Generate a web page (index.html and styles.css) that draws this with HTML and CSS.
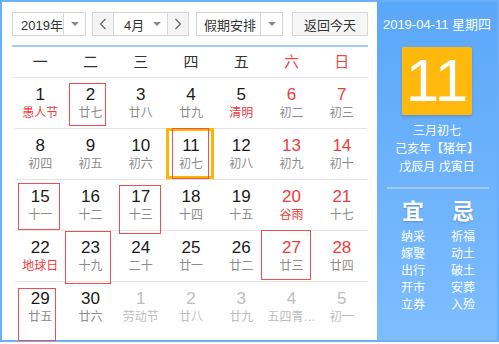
FILE: index.html
```html
<!DOCTYPE html>
<html lang="zh-CN">
<head>
  <meta charset="UTF-8" />
  <title>万年历</title>
  <link rel="stylesheet" href="styles.css">
</head>
<body>
  <div class="cal">
    <div class="main">
      <div class="toolbar">
        <div class="select year"><span class="select-text">2019年</span><span class="select-arrow"></span></div>
        <div class="month-group">
          <button class="nav-btn prev"><svg width="8" height="12" viewBox="0 0 8 12"><polyline points="6.5,1 1.5,6 6.5,11" fill="none" stroke="#666" stroke-width="1.2"/></svg></button>
          <div class="month"><span class="select-text">4月</span><span class="month-arrow"></span></div>
          <button class="nav-btn next"><svg width="8" height="12" viewBox="0 0 8 12"><polyline points="1.5,1 6.5,6 1.5,11" fill="none" stroke="#666" stroke-width="1.2"/></svg></button>
        </div>
        <div class="select holiday"><span class="select-text">假期安排</span><span class="select-arrow"></span></div>
        <button class="today-btn">返回今天</button>
      </div>

      <div class="weekdays">
        <span>一</span><span>二</span><span>三</span><span>四</span><span>五</span>
        <span class="red">六</span><span class="red">日</span>
      </div>

      <div class="days">
        <div class="day"><b>1</b><i class="fest">愚人节</i></div>
        <div class="day"><b>2</b><i>廿七</i><span class="mark m2"></span></div>
        <div class="day"><b>3</b><i>廿八</i></div>
        <div class="day"><b>4</b><i>廿九</i></div>
        <div class="day"><b>5</b><i class="fest">清明</i></div>
        <div class="day weekend"><b>6</b><i>初二</i></div>
        <div class="day weekend"><b>7</b><i>初三</i></div>

        <div class="day"><b>8</b><i>初四</i></div>
        <div class="day"><b>9</b><i>初五</i></div>
        <div class="day"><b>10</b><i>初六</i></div>
        <div class="day today"><b>11</b><i>初七</i><span class="mark m11"></span></div>
        <div class="day"><b>12</b><i>初八</i></div>
        <div class="day weekend"><b>13</b><i>初九</i></div>
        <div class="day weekend"><b>14</b><i>初十</i></div>

        <div class="day"><b>15</b><i>十一</i><span class="mark m15"></span></div>
        <div class="day"><b>16</b><i>十二</i></div>
        <div class="day"><b>17</b><i>十三</i><span class="mark m17"></span></div>
        <div class="day"><b>18</b><i>十四</i></div>
        <div class="day"><b>19</b><i>十五</i></div>
        <div class="day weekend"><b>20</b><i class="fest">谷雨</i></div>
        <div class="day weekend"><b>21</b><i>十七</i></div>

        <div class="day"><b>22</b><i class="fest">地球日</i></div>
        <div class="day"><b>23</b><i>十九</i><span class="mark m23"></span></div>
        <div class="day"><b>24</b><i>二十</i></div>
        <div class="day"><b>25</b><i>廿一</i></div>
        <div class="day"><b>26</b><i>廿二</i></div>
        <div class="day weekend"><b>27</b><i>廿三</i><span class="mark m27"></span></div>
        <div class="day weekend"><b>28</b><i>廿四</i></div>

        <div class="day last"><b>29</b><i>廿五</i><span class="mark m29"></span></div>
        <div class="day last"><b>30</b><i>廿六</i></div>
        <div class="day last other"><b>1</b><i>劳动节</i></div>
        <div class="day last other"><b>2</b><i>廿八</i></div>
        <div class="day last other"><b>3</b><i>廿九</i></div>
        <div class="day last other"><b>4</b><i>五四青…</i></div>
        <div class="day last other"><b>5</b><i>初一</i></div>
      </div>
    </div>

    <aside class="panel">
      <div class="panel-date">2019-04-11 星期四</div>
      <div class="big-day">11</div>
      <div class="lunar">
        <p>三月初七</p>
        <p>己亥年【猪年】</p>
        <p>戊辰月 戊寅日</p>
      </div>
      <div class="divider"></div>
      <div class="yiji">
        <div class="yiji-col">
          <h3>宜</h3>
          <p>纳采</p><p>嫁娶</p><p>出行</p><p>开市</p><p>立券</p>
        </div>
        <div class="yiji-col">
          <h3>忌</h3>
          <p>祈福</p><p>动土</p><p>破土</p><p>安葬</p><p>入殓</p>
        </div>
      </div>
    </aside>
  </div>
</body>
</html>
```

FILE: styles.css
```css
body {
  margin: 0;
  font-family: "Liberation Sans", "Noto Sans CJK SC", sans-serif;
  background: #fff;
}
.cal {
  display: flex;
  width: 499px;
  height: 342px;
  border: 2px solid #6ab0f8;
  box-sizing: border-box;
}
.main {
  flex: 1;
  background: #fff;
  padding: 10px 9px 0 10px;
}

/* toolbar */
.toolbar {
  display: flex;
  height: 24px;
  margin-bottom: 9px;
}
.select,
.month-group {
  display: flex;
  height: 24px;
  border: 1px solid #d6d6d6;
  box-sizing: border-box;
  font-size: 13px;
  color: #333;
}
.select-text {
  flex: 1;
  display: flex;
  align-items: center;
  padding-left: 8px;
  white-space: nowrap;
  overflow: hidden;
}
.select-arrow,
.month-arrow {
  flex: none;
  width: 21px;
  display: flex;
  align-items: center;
  justify-content: center;
}
.select-arrow {
  border-left: 1px solid #d6d6d6;
}
.select-arrow::after,
.month-arrow::after {
  content: "";
  border-left: 4px solid transparent;
  border-right: 4px solid transparent;
  border-top: 4px solid #8a8a8a;
}
.year {
  width: 74px;
}
.month-group {
  width: 97px;
  margin-left: 6px;
}
.nav-btn {
  flex: none;
  width: 21px;
  padding: 0;
  border: none;
  background: #f4f4f4;
  display: flex;
  align-items: center;
  justify-content: center;
}
.nav-btn.prev {
  border-right: 1px solid #d6d6d6;
}
.nav-btn.next {
  border-left: 1px solid #d6d6d6;
}
.month {
  flex: 1;
  display: flex;
}
.month .select-text {
  padding-left: 10px;
}
.holiday {
  width: 87px;
  margin-left: 7px;
}
.holiday .select-text {
  padding-left: 7px;
}
.today-btn {
  width: 76px;
  height: 24px;
  margin-left: 9px;
  border: 1px solid #d9d9d9;
  background: #f6f6f6;
  font-family: inherit;
  font-size: 13px;
  color: #333;
  padding: 0;
}

/* grid */
.weekdays,
.days {
  display: grid;
  grid-template-columns: repeat(7, 1fr);
  padding: 0 1px 0 3px;
}
.weekdays {
  height: 30px;
  line-height: 30px;
  border-top: 2px solid #a3cdf4;
  border-bottom: 1px solid #e4e4e4;
  text-align: center;
  font-size: 15px;
  color: #333;
}
.weekdays .red {
  color: #f04848;
}
.day {
  position: relative;
  height: 51px;
  border-bottom: 1px solid #e4e4e4;
  text-align: center;
  padding-top: 7px;
  box-sizing: border-box;
}
.day.last {
  border-bottom: none;
}
.day b {
  display: block;
  font-weight: normal;
  font-size: 17px;
  line-height: 20px;
  color: #1a1a1a;
}
.day i {
  display: block;
  font-style: normal;
  font-size: 12px;
  line-height: 16px;
  color: #8c8c8c;
  white-space: nowrap;
}
.day.weekend b {
  color: #ee3b3b;
}
.day i.fest {
  color: #ee3b3b;
}
.day.other b,
.day.other i {
  color: #bdbdbd;
}
.day.today::after {
  content: "";
  position: absolute;
  left: 0;
  top: -1px;
  width: 48px;
  height: 51px;
  border: 3px solid #ffb400;
  box-sizing: border-box;
}

/* red annotation boxes */
.mark {
  position: absolute;
  border: 1px solid #ef4f4f;
  box-sizing: border-box;
  z-index: 1;
}
.m2  { left: 4px;  top: 5px;  width: 37px; height: 43px; }
.m11 { left: 6px;  top: -1px; width: 37px; height: 51px; }
.m15 { left: 3px;  top: 3px;  width: 42px; height: 47px; }
.m17 { left: 3px;  top: 5px;  width: 42px; height: 49px; }
.m23 { left: 0;    top: 0;    width: 46px; height: 53px; }
.m27 { left: -5px; top: -1px; width: 50px; height: 50px; }
.m29 { left: 3px;  top: 6px;  width: 38px; height: 53px; }

/* side panel */
.panel {
  width: 120px;
  background: linear-gradient(#5ba7f9, #7ebdff);
  color: #fff;
  text-align: center;
}
.panel-date {
  margin-top: 15px;
  font-size: 13px;
  line-height: 16px;
}
.big-day {
  width: 70px;
  height: 68px;
  margin: 14px auto 0;
  background: #ffb80c;
  border-radius: 2px;
  box-shadow: 0 2px 3px rgba(0, 0, 0, 0.15);
  font-size: 60px;
  line-height: 68px;
}
.lunar {
  margin-top: 7px;
  font-size: 12px;
  line-height: 18px;
}
.lunar p {
  margin: 0;
}
.divider {
  height: 2px;
  margin: 11px 8px 0 10px;
  background: rgba(255, 255, 255, 0.35);
}
.yiji {
  display: flex;
  padding-left: 11px;
  margin-top: 10px;
}
.yiji-col {
  width: 50px;
}
.yiji-col h3 {
  margin: 0 0 4px;
  font-size: 22px;
  line-height: 26px;
  text-shadow: 0 1px 2px rgba(0, 0, 0, 0.2);
}
.yiji-col p {
  margin: 0;
  font-size: 12px;
  line-height: 17px;
}
```
